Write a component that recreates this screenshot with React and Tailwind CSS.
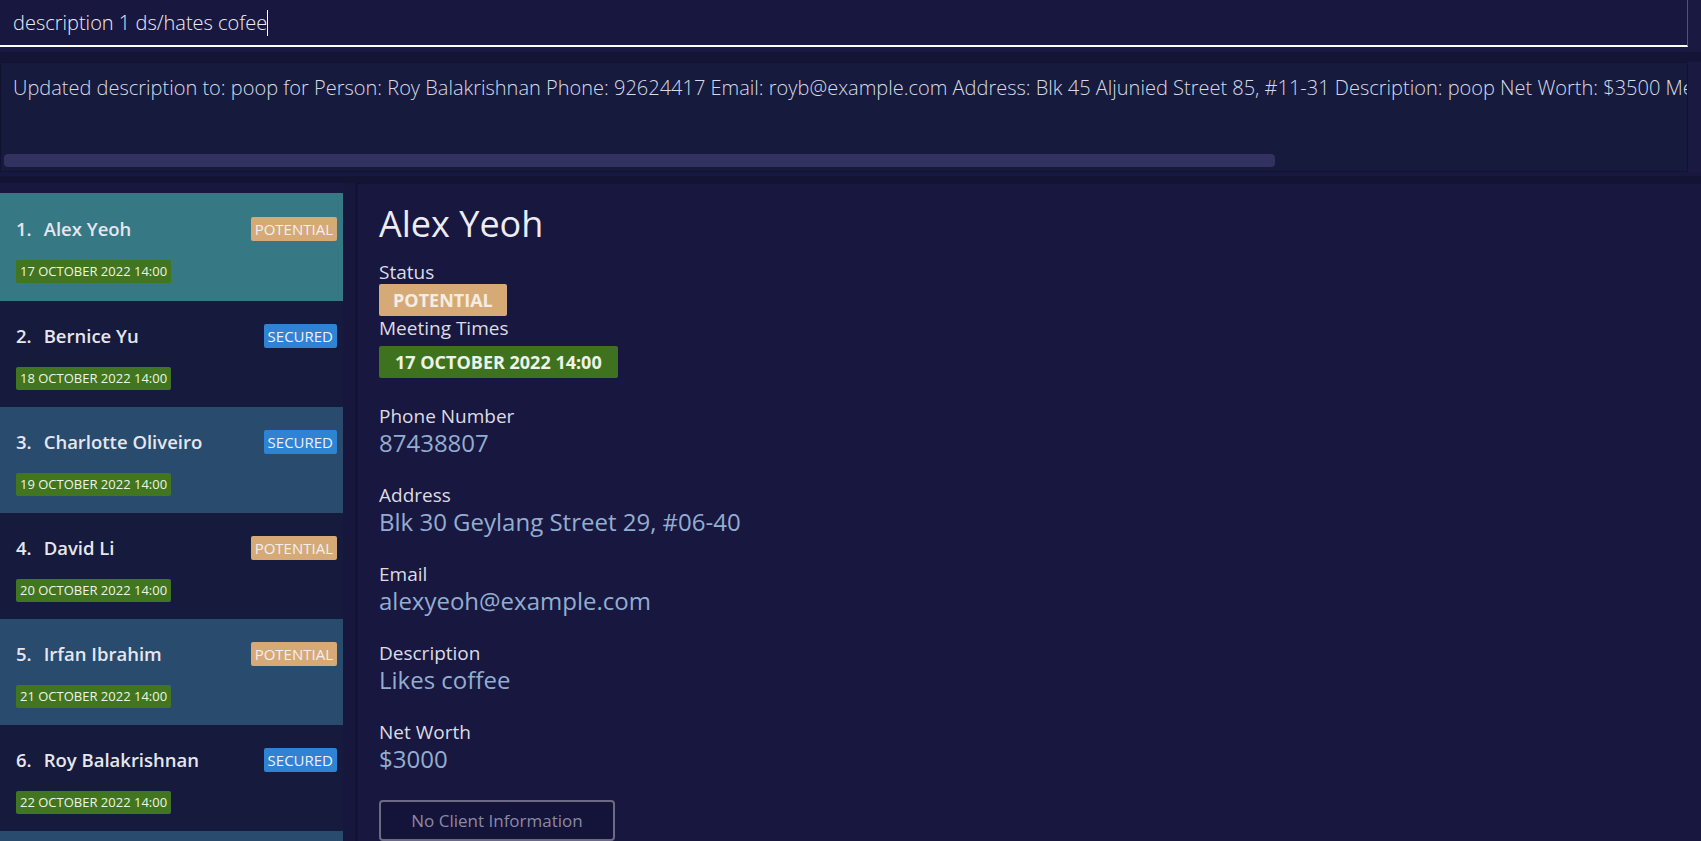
import React from "react"

const people = [
  { name: "Alex Yeoh", status: "POTENTIAL", date: "17 OCTOBER 2022 14:00", bg: "bg-[#367985]" },
  { name: "Bernice Yu", status: "SECURED", date: "18 OCTOBER 2022 14:00", bg: "bg-[#161a3c]" },
  { name: "Charlotte Oliveiro", status: "SECURED", date: "19 OCTOBER 2022 14:00", bg: "bg-[#284b6e]" },
  { name: "David Li", status: "POTENTIAL", date: "20 OCTOBER 2022 14:00", bg: "bg-[#161a3c]" },
  { name: "Irfan Ibrahim", status: "POTENTIAL", date: "21 OCTOBER 2022 14:00", bg: "bg-[#284b6e]" },
  { name: "Roy Balakrishnan", status: "SECURED", date: "22 OCTOBER 2022 14:00", bg: "bg-[#161a3c]" },
  { name: "Benjamin Tan", status: "POTENTIAL", date: "23 OCTOBER 2022 14:00", bg: "bg-[#284b6e]" },
]

const fields = [
  { label: "Phone Number", value: "87438807" },
  { label: "Address", value: "Blk 30 Geylang Street 29, #06-40" },
  { label: "Email", value: "alexyeoh@example.com" },
  { label: "Description", value: "Likes coffee" },
  { label: "Net Worth", value: "$3000" },
]

const StatusTag = ({ status }) => (
  <span
    className={`inline-flex items-center h-[24px] px-[4px] rounded-[2px] text-[15px] text-[#eef0f4] leading-none ${
      status === "SECURED" ? "bg-[#2f82d4]" : "bg-[#d6aa76]"
    }`}
  >
    {status}
  </span>
)

const PersonCard = ({ person, index }) => (
  <div className={`${person.bg} ${index === 0 ? "h-[108px] pt-[24px]" : "h-[106px] pt-[23px]"} shrink-0 pl-[16px] pr-[6px]`}>
    <div className="flex items-center justify-between h-[24px]">
      <span className="text-[18.5px] font-semibold text-[#e6e6ee] whitespace-nowrap">
        <span>{index + 1}.</span>
        <span className="ml-[12px]">{person.name}</span>
      </span>
      <StatusTag status={person.status} />
    </div>
    <div className="mt-[17px]">
      <span className="inline-flex items-center h-[23px] px-[4px] rounded-[2px] bg-[#41751f] text-[13px] font-medium text-[#eef4e6] leading-none">
        {person.date}
      </span>
    </div>
  </div>
)

const App = () => {
  return (
    <div className="w-[1701px] h-[841px] overflow-hidden bg-[#18173f] flex flex-col font-['Open_Sans',sans-serif]">
      {/* command box */}
      <div className="flex h-[47px] shrink-0">
        <div className="w-[1688px] h-full bg-[#18173f] border-r border-[#55546e] border-b-2 border-b-white flex items-center pl-[13px]">
          <span className="text-[20px] font-light text-[#ececf4]">description 1 ds/hates cofee</span>
          <span className="w-px h-[26px] bg-white" />
        </div>
        <div className="flex-1 bg-[#1a1941]" />
      </div>
      <div className="h-[5px] shrink-0 bg-[#1a1941]" />
      <div className="h-[10px] shrink-0 bg-[#141436]" />

      {/* result box */}
      <div className="flex h-[110px] shrink-0">
        <div className="w-[1688px] h-full bg-[#161b3e] border border-[#111230] flex flex-col overflow-hidden">
          <div className="pl-[12px] pt-[10px] h-[91px] overflow-hidden whitespace-nowrap text-[20px] font-light text-[#d8dae6]">
            Updated description to: poop for Person: Roy Balakrishnan Phone: 92624417 Email: royb@example.com Address: Blk 45 Aljunied Street 85, #11-31 Description: poop Net Worth: $3500 Meeting Times: 22 October 2022 14:00
          </div>
          <div className="pl-[3px]">
            <div className="w-[1271px] h-[13px] rounded-[4px] bg-[#33315f]" />
          </div>
        </div>
        <div className="flex-1 bg-[#1a1941]" />
      </div>
      <div className="h-[4px] shrink-0 bg-[#18173f]" />
      <div className="h-[7px] shrink-0 bg-[#131334]" />

      {/* main */}
      <div className="flex flex-1 min-h-0">
        <div className="w-[343px] shrink-0 flex flex-col pt-[10px] overflow-hidden">
          {people.map((p, i) => (
            <PersonCard key={p.name} person={p} index={i} />
          ))}
        </div>
        <div className="w-[12px] shrink-0 bg-[#17163c]" />
        <div className="w-[3px] shrink-0 bg-[#121232]" />

        <div className="flex-1 border-t border-[#121232] pl-[21px] pt-[18px] flex flex-col items-start">
          <h1 className="text-[36px] leading-[44px] text-[#ececf2]">Alex Yeoh</h1>

          <div className="mt-[14px] text-[19px] leading-[24px] text-[#dcdce4]">Status</div>
          <span className="inline-flex items-center h-[32px] px-[14px] rounded-[2px] bg-[#d6aa76] text-[18px] font-bold text-[#f4ede4]">
            POTENTIAL
          </span>
          <div className="text-[19px] leading-[24px] text-[#dcdce4]">Meeting Times</div>
          <span className="mt-[6px] inline-flex items-center h-[32px] px-[16px] rounded-[2px] bg-[#3f721f] text-[18px] font-bold text-[#eef2e8]">
            17 OCTOBER 2022 14:00
          </span>

          <div className="mt-[26px] flex flex-col gap-[25px]">
            {fields.map((f) => (
              <div key={f.label} className="flex flex-col">
                <span className="text-[19px] leading-[24px] text-[#dcdce4]">{f.label}</span>
                <span className="text-[24px] leading-[30px] text-[#93add0]">{f.value}</span>
              </div>
            ))}
          </div>

          <button
            type="button"
            className="mt-[26px] w-[236px] h-[41px] shrink-0 rounded-[4px] border-2 border-[#6c6b85] bg-[#141339] text-[17px] text-[#8b8aa5]"
          >
            No Client Information
          </button>
        </div>
      </div>
    </div>
  )
}

export default App
